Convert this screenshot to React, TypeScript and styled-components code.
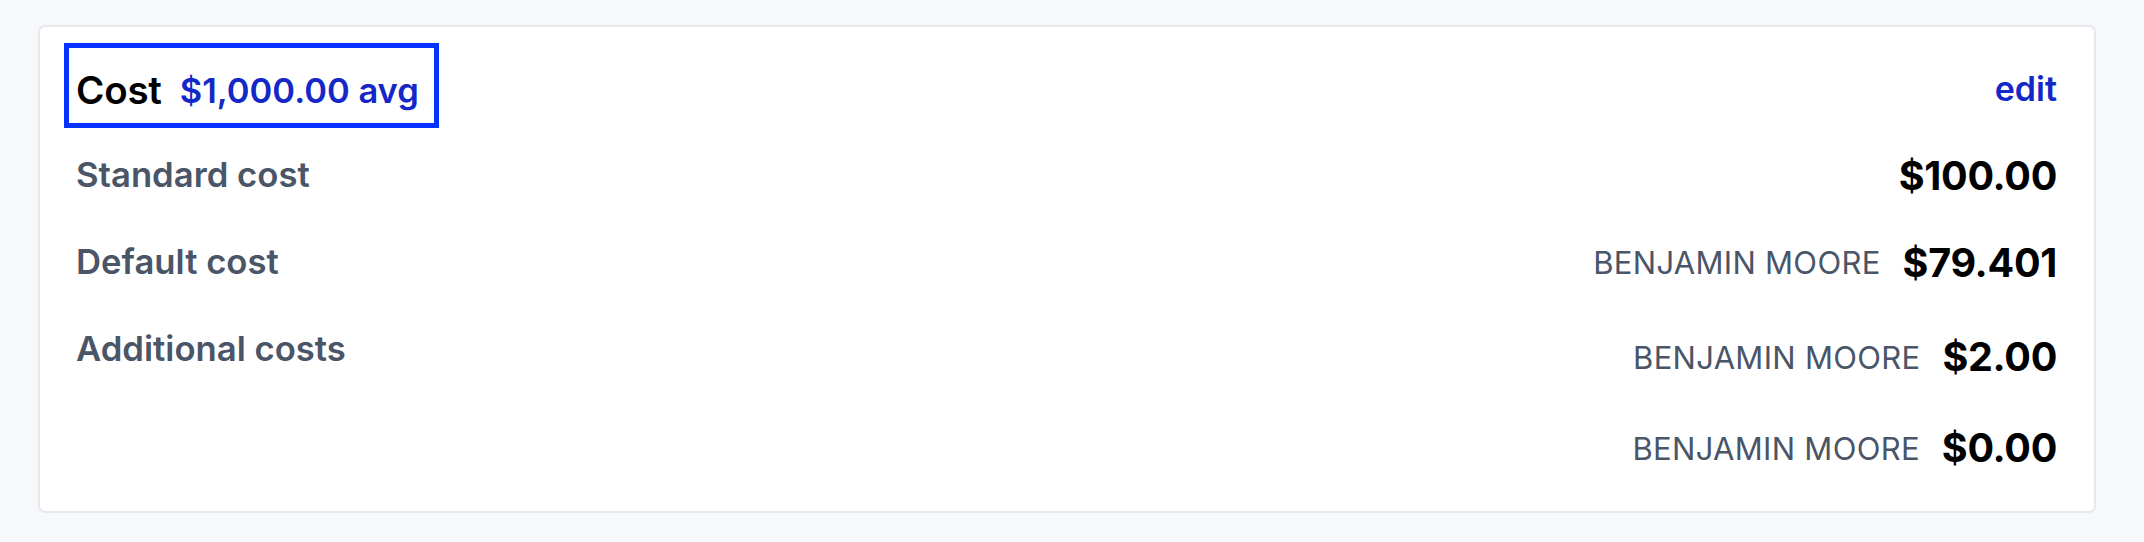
import React from "react";
import styled, { createGlobalStyle } from "styled-components";

const GlobalStyle = createGlobalStyle`
  html, body {
    margin: 0;
    padding: 0;
    background: #f7f8fa;
    font-family: Inter, "Noto Sans", "Liberation Sans", sans-serif;
    -webkit-font-smoothing: antialiased;
  }
  #root {
    min-height: 542px;
  }
`;

const Page = styled.main`
  padding: 25px 0 30px 38px;
  box-sizing: border-box;
`;

const Card = styled.section`
  box-sizing: border-box;
  width: 2058px;
  background: #ffffff;
  border: 2px solid #e6e8ed;
  border-radius: 7px;
  padding: 21px 37px 18px 36px;
  display: flex;
  flex-direction: column;
`;

const Header = styled.header`
  display: flex;
  align-items: center;
  justify-content: space-between;
  height: 75px;
`;

const Heading = styled.h2`
  margin: 0 0 0 -7px;
  height: 75px;
  box-sizing: border-box;
  padding: 9px 15px 0 7px;
  display: inline-flex;
  align-items: center;
  gap: 18px;
  outline: 5px solid #0433ff;
  font-weight: 600;
`;

const Title = styled.span`
  font-size: 38.5px;
  color: #000000;
  letter-spacing: -0.2px;
`;

const Average = styled.span`
  font-size: 34.5px;
  color: #1428c8;
`;

const EditLink = styled.a`
  font-size: 34px;
  font-weight: 600;
  color: #1428c8;
  text-decoration: none;
  cursor: pointer;
  padding-top: 6px;
`;

const Rows = styled.div`
  display: flex;
  flex-direction: column;
  margin-top: 8px;
`;

const Row = styled.div`
  display: flex;
  justify-content: space-between;
  align-items: flex-start;
`;

const Label = styled.span`
  font-size: 34.7px;
  font-weight: 600;
  color: #4a5568;
  line-height: 87px;
`;

const Values = styled.div<{ $offset?: number }>`
  display: flex;
  flex-direction: column;
  align-items: flex-end;
  padding-top: ${(p) => p.$offset ?? 0}px;
`;

const ValueLine = styled.div<{ $height: number }>`
  display: flex;
  align-items: center;
  gap: 22px;
  height: ${(p) => p.$height}px;
`;

const Vendor = styled.span`
  font-size: 31px;
  font-weight: 400;
  color: #4a5568;
  letter-spacing: 0.3px;
  padding-top: 2px;
`;

const Amount = styled.span<{ $nudge?: number }>`
  font-size: 39.5px;
  font-weight: 700;
  color: #000000;
  letter-spacing: -0.3px;
  padding-top: ${(p) => p.$nudge ?? 0}px;
`;

type Entry = { vendor?: string; amount: string };

const rows: { label: string; entries: Entry[] }[] = [
  { label: "Standard cost", entries: [{ amount: "$100.00" }] },
  { label: "Default cost", entries: [{ vendor: "BENJAMIN MOORE", amount: "$79.401" }] },
  {
    label: "Additional costs",
    entries: [
      { vendor: "BENJAMIN MOORE", amount: "$2.00" },
      { vendor: "BENJAMIN MOORE", amount: "$0.00" },
    ],
  },
];

export default function App() {
  return (
    <>
      <GlobalStyle />
      <Page>
        <Card>
          <Header>
            <Heading tabIndex={0}>
              <Title>Cost</Title>
              <Average>$1,000.00 avg</Average>
            </Heading>
            <EditLink>edit</EditLink>
          </Header>
          <Rows>
            {rows.map((row) => {
              const multi = row.entries.length > 1;
              return (
                <Row key={row.label}>
                  <Label>{row.label}</Label>
                  <Values $offset={multi ? 6 : 0}>
                    {row.entries.map((e, i) => (
                      <ValueLine key={i} $height={multi ? 91 : 87}>
                        {e.vendor && <Vendor>{e.vendor}</Vendor>}
                        <Amount $nudge={multi ? 0 : 3}>{e.amount}</Amount>
                      </ValueLine>
                    ))}
                  </Values>
                </Row>
              );
            })}
          </Rows>
        </Card>
      </Page>
    </>
  );
}
